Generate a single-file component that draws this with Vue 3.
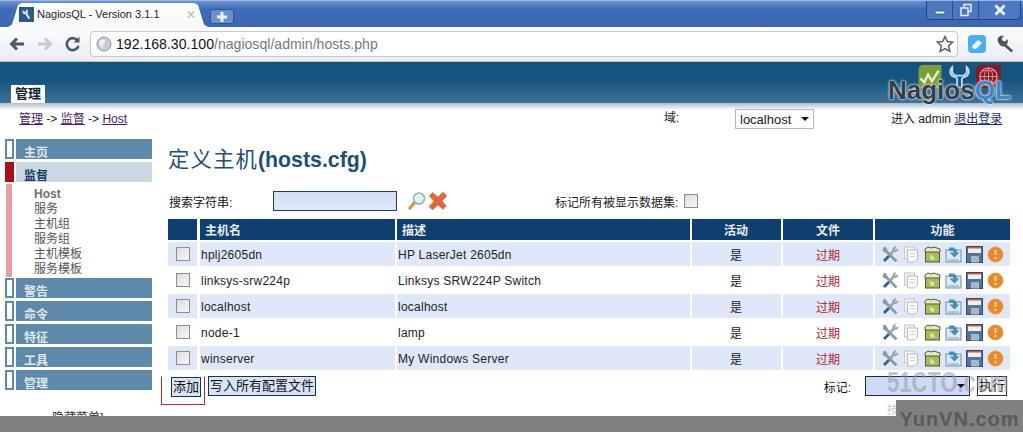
<script setup>
const rows = [
  { name: 'hplj2605dn', desc: 'HP LaserJet 2605dn' },
  { name: 'linksys-srw224p', desc: 'Linksys SRW224P Switch' },
  { name: 'localhost', desc: 'localhost' },
  { name: 'node-1', desc: 'lamp' },
  { name: 'winserver', desc: 'My Windows Server' },
]
const closedTop = ['主页']
const closedBottom = ['警告', '命令', '特征', '工具', '管理']
const subs = ['服务', '主机组', '服务组', '主机模板', '服务模板']
</script>

<template>
  <div class="page">
    <div class="tabbar">
      <div class="tab">
        <svg class="favicon" width="15" height="15" viewBox="0 0 16 16"><rect width="16" height="16" fill="#2a5a85"/><path d="M4 3c-1 3 0 5 3 5l3 5 2-1-3-5c1-2 1-3-1-5l-1 3-2-.5z" fill="#cfe0ee"/></svg>
        <span class="tabtitle">NagiosQL - Version 3.1.1</span>
        <span class="tabclose">×</span>
      </div>
      <div class="newtab"><svg width="12" height="12" viewBox="0 0 12 12"><path d="M6 1v10M1 6h10" stroke="#e8f0fa" stroke-width="3"/></svg></div>
      <div class="winbtns">
        <div class="winbtn"><svg width="14" height="14" viewBox="0 0 14 14"><rect x="2" y="8" width="10" height="3" rx="1" fill="#e6eef8" stroke="#2a4a7a" stroke-width=".7"/></svg></div>
        <div class="winbtn"><svg width="14" height="14" viewBox="0 0 14 14"><rect x="5" y="1.5" width="7" height="7" fill="none" stroke="#e6eef8" stroke-width="1.5"/><rect x="2" y="5" width="7" height="7.5" fill="#4a76bd" stroke="#e6eef8" stroke-width="1.5"/></svg></div>
        <div class="winbtn wide"><svg width="14" height="14" viewBox="0 0 14 14"><path d="M2.5 2.5l9 9M11.5 2.5l-9 9" stroke="#e6eef8" stroke-width="3"/></svg></div>
      </div>
    </div>

    <div class="toolbar">
      <svg class="navicon" width="18" height="18" viewBox="0 0 18 18"><path d="M3 9h13M9 3.500L3.500 9 9 14.500" fill="none" stroke="#4a5a6e" stroke-width="3"/></svg>
      <svg class="navicon" width="18" height="18" viewBox="0 0 18 18"><path d="M15 9H2M9 3.500L14.500 9 9 14.500" fill="none" stroke="#c6ccd4" stroke-width="3"/></svg>
      <svg class="navicon" width="18" height="18" viewBox="0 0 18 18"><path d="M14.500 11a6 6 0 1 1-.6-5" fill="none" stroke="#4a5a6e" stroke-width="2.600"/><path d="M15.500 1.500v6h-6z" fill="#4a5a6e"/></svg>
      <div class="omnibox">
        <svg width="16" height="16" viewBox="0 0 16 16"><circle cx="8" cy="8" r="7" fill="#c8ccd2" stroke="#8c929a"/><path d="M3 6c2-3 5-3 6-1s-3 3-2 6-3-1-4-5z" fill="#f2f3f5"/></svg>
        <span class="url"><b>192.168.30.100</b><i>/nagiosql/admin/hosts.php</i></span>
        <svg class="star" width="18" height="18" viewBox="0 0 18 18"><path d="M9 1.500l2.300 5 5.400.6-4 3.700 1.100 5.400L9 13.500l-4.800 2.700 1.100-5.400-4-3.700 5.400-.6z" fill="#fff" stroke="#5a626c" stroke-width="1.500"/></svg>
      </div>
      <svg class="ext" width="20" height="20" viewBox="0 0 20 20"><rect x="1" y="1" width="18" height="18" rx="4" fill="#4bb0ea"/><path d="M5 12l6-6 4 3-6 6-3-.5z" fill="#eef7fd"/></svg>
      <svg class="wrench" width="20" height="20" viewBox="0 0 20 20"><path d="M1.500 5.500C2 2.500 5 1 8 2L5.500 4.500l1.500 2.500 2.500.5L11 5c1.500 2 1 4-.5 5.500l6.500 6-1.500 2-7-6C5 13 2 10 1.500 5.500z" fill="#4a5560"/></svg>
    </div>

    <header class="appbar">
      <div class="apptab">管理</div>
      <div class="logo">
        <div class="logoicons">
          <svg width="24" height="23" viewBox="0 0 24 24"><path d="M3 0h21v24H0V3z" fill="#7e9c3c"/><path d="M2 14l4 4 4-8 4 7 7-11" fill="none" stroke="#e9f0d0" stroke-width="2.500"/></svg>
          <svg width="22" height="23" viewBox="0 0 22 24"><path d="M4 2C1 5 1 10 5 12c2 1 3 1 4 2v10h5V14c1-1 2-1 4-2 4-2 4-7 1-10v6l-3 3H7L4 8z" fill="#1c5a86" stroke="#c3dbee" stroke-width="1.800"/></svg>
          <svg width="25" height="23" viewBox="0 0 26 24"><path d="M3 0h23v24H0V3z" fill="#7c1b2c"/><circle cx="13" cy="12" r="9" fill="none" stroke="#e98c8c" stroke-width="1.500"/><path d="M4 12h18M13 3v18M7 6h12M7 18h12M13 3c-6 5-6 13 0 18M13 3c6 5 6 13 0 18" fill="none" stroke="#e98c8c"/></svg>
        </div>
        <div class="logotext">Nagios<span>QL</span></div>
      </div>
    </header>

    <div class="crumbbar">
      <div class="crumbs"><a>管理</a> -&gt; <a>监督</a> -&gt; <a>Host</a></div>
      <div class="domain">域:</div>
      <div class="select plain"><span>localhost</span><i class="caret"></i></div>
      <div class="login">进入 admin <a>退出登录</a></div>
    </div>

    <div class="body">
      <nav class="side">
        <div v-for="m in closedTop" :key="m" class="menu">
          <span class="mark"></span><span class="menuitem">{{ m }}</span>
        </div>
        <div class="menu">
          <span class="mark red"></span><span class="menuitem active">监督</span>
        </div>
        <div class="subwrap">
          <span class="subbar"></span>
          <div class="sublist">
            <div class="sub strong">Host</div>
            <div v-for="s in subs" :key="s" class="sub">{{ s }}</div>
          </div>
        </div>
        <div v-for="m in closedBottom" :key="m" class="menu">
          <span class="mark"></span><span class="menuitem">{{ m }}</span>
        </div>
        <div class="hide">隐藏菜单]</div>
      </nav>

      <main class="content">
        <h1><span class="cjk">定义主机</span>(hosts.cfg)</h1>
        <div class="filter">
          <span class="flabel">搜索字符串:</span>
          <span class="search"></span>
          <svg class="ficon" width="20" height="20" viewBox="0 0 20 20"><path d="M8 11l-5 6" stroke="#d09a50" stroke-width="3.500" stroke-linecap="round"/><circle cx="12" cy="7.500" r="5.500" fill="#e6f1f6" stroke="#8fb2c2" stroke-width="1.600"/></svg>
          <svg class="ficon x" width="20" height="20" viewBox="0 0 20 20"><path d="M1 5l3.500-3.500L10 6l5-5 4 4-5 5 4.500 5-3.500 3.500L10 14l-5.500 5L1 15.500 6 10z" fill="#e2673a" stroke="#c98a62" stroke-width=".6"/></svg>
          <span class="marklabel">标记所有被显示数据集:</span>
          <span class="cb"></span>
        </div>

        <table class="grid">
          <colgroup>
            <col class="c0" /><col class="c1" /><col class="c2" /><col class="c3" /><col class="c4" /><col class="c5" />
          </colgroup>
          <thead>
            <tr>
              <th></th><th class="l">主机名</th><th class="l">描述</th><th>活动</th><th>文件</th><th>功能</th>
            </tr>
          </thead>
          <tbody>
            <tr v-for="(r, i) in rows" :key="r.name" :class="{ odd: i % 2 === 0 }">
              <td class="ctr"><span class="cb"></span></td>
              <td class="txt">{{ r.name }}</td>
              <td class="txt">{{ r.desc }}</td>
              <td class="ctr">是</td>
              <td class="ctr expired">过期</td>
              <td class="ctr">
                <div class="acts">
                  <svg width="17" height="17" viewBox="0 0 17 17"><path d="M2 1l2 1 1.500 3 9.500 9.500-1.500 1.500L4 6.500 1 5z" fill="#8d9aa6" stroke="#66737f" stroke-width=".5"/><path d="M16 3c-.5 2-2 3-3.500 2.500L8 10l-1.500-1.500L11 4c-.5-1.500.5-3 2.500-3.500L12.500 3l1.500 1z" fill="#a5b0ba" stroke="#66737f" stroke-width=".5"/><path d="M1 14l5-5 2 2-5 5z" fill="#2f5f9a"/></svg>
                  <svg width="17" height="17" viewBox="0 0 17 17"><rect x="1.500" y="1" width="10" height="12" fill="#f1f1ee" stroke="#c8cac7"/><path d="M4.500 4h10v9l-3 3h-7z" fill="#fafaf8" stroke="#b9bcb9"/><path d="M7 7.500h5M7 10.500h5" stroke="#cdcfcd"/></svg>
                  <svg width="17" height="17" viewBox="0 0 17 17"><rect x="1.500" y="5" width="14" height="11" fill="#a9bc5b" stroke="#4e5b2a"/><path d="M1 6V3l3-2 3 1 3-1 3 1 3 1v3z" fill="#e6e4c5" stroke="#555c3b"/><path d="M6 9l3 1 2 3-4 1z" fill="#dfe8b0"/></svg>
                  <svg width="17" height="17" viewBox="0 0 17 17"><rect x="1" y="4" width="15" height="12" fill="#dcebf5" stroke="#6d8ea6"/><path d="M4 1.500h5l3 3v2h2.500l-5 5-5-5H8V5H4z" fill="#4b90b8"/><path d="M3 14h11" stroke="#8a9aa6"/></svg>
                  <svg width="17" height="17" viewBox="0 0 17 17"><rect x=".500" y=".500" width="16" height="16" fill="#50769c" stroke="#2e4c6a"/><rect x="2" y="1" width="13" height="6" fill="#f4efe9"/><rect x="2" y="1" width="13" height="1.500" fill="#d0544f"/><rect x="5" y="10" width="8" height="6.500" fill="#aab7c3"/></svg>
                  <svg width="17" height="17" viewBox="0 0 17 17"><circle cx="8.500" cy="8.500" r="7.500" fill="#e8892b" stroke="#e39a52"/><path d="M8.500 4v5" stroke="#f6d79a" stroke-width="2"/><circle cx="8.500" cy="12" r="1.200" fill="#f6d79a"/></svg>
                </div>
              </td>
            </tr>
          </tbody>
        </table>

        <div class="actions">
          <div class="leftbtns">
            <span class="hl"><span class="btn">添加</span></span>
            <span class="btn">写入所有配置文件</span>
          </div>
          <div class="rightbtns">
            <span class="marklabel2">标记:</span>
            <div class="select tinted"><i class="caret"></i></div>
            <span class="btn ghost">执行</span>
          </div>
        </div>
      </main>
    </div>

    <div class="footerbar"></div>
    <div class="wm wm1">51CTO.com</div>
    <div class="wm wm3">技</div>
    <div class="wm2"><span>YunVN.com</span></div>
  </div>
</template>

<style scoped>
.page { position: relative; width: 1023px; height: 432px; overflow: hidden; background: #fff; font: 12px "Liberation Sans", "Noto Sans CJK SC", sans-serif; color: #111; }
.tabbar { height: 27px; display: flex; align-items: flex-end; padding-left: 8px; background: linear-gradient(#6f93cf, #3f6db8 30%, #3a66ae); border-top: 1px solid #9db6dc; box-sizing: border-box; position: relative; }
.tab { width: 200px; height: 24px; box-sizing: border-box; background: linear-gradient(#fff, #f6f8fa); clip-path: polygon(0 100%, 4px 90%, 10px 8%, 14px 0, calc(100% - 14px) 0, calc(100% - 10px) 8%, calc(100% - 4px) 90%, 100% 100%); display: flex; align-items: center; padding: 0 12px 2px 11px; gap: 3px; }
.favicon { flex: none; }
.tabtitle { font-size: 11px; color: #222; flex: 1; white-space: nowrap; }
.tabclose { color: #b9bdc3; font-size: 17px; line-height: 1; }
.newtab { width: 24px; height: 15px; margin: 0 0 3px 2px; background: #6b90cd; border: 1px solid #2d5595; border-radius: 3px; display: flex; align-items: center; justify-content: center; box-sizing: border-box; }
.winbtns { position: absolute; top: 0; right: 2px; display: flex; height: 18px; border: 1px solid #24457e; border-top: 0; border-radius: 0 0 4px 4px; background: #4c78bf; }
.winbtn { width: 25px; display: flex; align-items: center; justify-content: center; border-right: 1px solid #2c4f88; }
.winbtn.wide { width: 41px; border-right: 0; }

.toolbar { height: 35px; box-sizing: border-box; background: linear-gradient(#fbfcfd, #e9edf2); display: flex; align-items: center; padding: 0 7px 0 8px; gap: 9px; border-bottom: 1px solid #bdc4cc; }
.navicon { flex: none; margin-right: 1px; }
.omnibox { flex: 1; margin-left: -2px; height: 26px; box-sizing: border-box; background: #fff; border: 1px solid #c4c9cf; border-radius: 4px; display: flex; align-items: center; padding: 0 3px 0 5px; gap: 4px; }
.url { flex: 1; font-size: 14.100px; white-space: nowrap; }
.url b { font-weight: 400; color: #111; }
.url i { font-style: normal; color: #6e7a82; }
.star { flex: none; }
.ext, .wrench { flex: none; }

.appbar { height: 41px; background: linear-gradient(#15547f 45%, #3f7298); position: relative; display: flex; align-items: flex-end; padding-left: 11px; box-sizing: border-box; }
.apptab { width: 34px; height: 18px; background: #fff; color: #123; font-weight: 700; font-size: 13px; text-align: center; line-height: 18px; }
.logo { position: absolute; right: 13px; bottom: -2px; width: 122px; height: 40px; }
.logoicons { position: absolute; left: 30px; top: 0; display: flex; gap: 6px; }
.logotext { position: absolute; left: 0; bottom: 0; font: 700 26px/30px "Liberation Sans", sans-serif; color: #333d48; text-shadow: 0 0 2px #fff, 0 0 3px #dfe8ef; white-space: nowrap; }
.logotext span { color: #3f86c4; }

.crumbbar { height: 35px; box-sizing: border-box; padding: 9px 0 0 19px; display: flex; align-items: flex-start; background: linear-gradient(#a8bccb, #fff 7px); color: #222; }
.crumbs { width: 645px; line-height: 15px; }
.crumbs a { color: #4a1d5e; text-decoration: underline; }
.domain { width: 71px; line-height: 15px; margin-top: -1px; }
.select { box-sizing: border-box; display: flex; align-items: center; justify-content: space-between; }
.select.plain { width: 79px; height: 20px; margin-top: -3px; padding: 0 4px; border: 1px solid #b8b8b8; background: #fff; font-size: 13px; }
.caret { width: 0; height: 0; border: 4px solid transparent; border-top: 4px solid #111; border-bottom: 0; margin-left: auto; }
.login { margin-left: 77px; line-height: 15px; white-space: nowrap; }
.login a { color: #1a2f6a; text-decoration: underline; }

.body { display: flex; align-items: flex-start; }
.side { width: 152px; flex: none; padding: 1px 0 0 5px; box-sizing: border-box; }
.menu { display: flex; gap: 2px; height: 20px; margin-bottom: 3px; }
.mark { width: 9px; box-sizing: border-box; border: 2px solid #5f89aa; background: #fff; }
.mark.red { background: #a80f18; border-color: #a80f18; }
.menuitem { flex: 1; background: #5f89aa; color: #dfe8ef; font-weight: 700; font-size: 12px; line-height: 29px; height: 20px; overflow: hidden; padding-left: 8px; }
.menuitem.active { background: #c9d8e3; color: #123b5e; }
.subwrap { display: flex; height: 93px; margin: -1px 0 1px; }
.subbar { width: 6px; margin-left: 1px; background: #e3a0a4; }
.sublist { padding: 3px 0 0 22px; }
.sub { line-height: 15px; color: #555; }
.sub.strong { font-weight: 700; color: #6e6e6e; }
.hide { margin: 18px 0 0 47px; color: #333; }

.content { flex: 1; padding: 0 13px 0 16px; min-width: 0; }
h1 { margin: 0; height: 45px; padding-top: 9px; box-sizing: border-box; color: #1d4e75; font: 700 21.300px/26px "Liberation Sans", "Noto Sans CJK SC", sans-serif; white-space: nowrap; }
.cjk { font-weight: 400; letter-spacing: 1.200px; }
.filter { display: flex; align-items: center; height: 36px; box-sizing: border-box; padding-left: 1px; }
.flabel { width: 104px; }
.search { width: 124px; height: 20px; box-sizing: border-box; background: linear-gradient(#d1def3, #e0e9f8); border: 1px solid #1f3b63; }
.ficon { margin-left: 10px; flex: none; }
.ficon.x { margin-left: 1px; }
.marklabel { margin-left: 107px; width: 129px; white-space: nowrap; color: #222; }
.cb { display: inline-block; width: 14px; height: 14px; box-sizing: border-box; border: 1px solid #8d8d8d; background: linear-gradient(135deg, #dcdcdc, #f8f8f8); vertical-align: middle; }
.grid { border-collapse: separate; border-spacing: 0; width: 842px; table-layout: fixed; }
.c0 { width: 32px; } .c1 { width: 197px; } .c2 { width: 295px; } .c3 { width: 91px; } .c4 { width: 92px; } .c5 { width: 135px; }
th { height: 20px; padding: 0 0 1px; background: #0f3f6e; color: #e8eef4; font-size: 12px; font-weight: 700; text-align: center; border-right: 2px solid #fff; }
th.l { text-align: left; padding-left: 5px; }
th:last-child { border-right: 0; }
th:first-child, td:first-child { border-right-width: 3px; }
th:nth-child(4), td:nth-child(4) { padding-right: 1px; }
td { height: 24px; padding: 0; border-right: 2px solid #fff; border-top: 2px solid #fff; color: #222; white-space: nowrap; }
td:last-child { border-right: 0; }
td.txt { height: 23px; padding: 1px 0 0 1px; letter-spacing: .25px; }
.odd td { background: #dfe8f8; }
.ctr { text-align: center; }
.expired { color: #b01c2e; }
.acts { display: flex; justify-content: center; gap: 4px; padding-left: 1px; }
.actions { display: flex; justify-content: space-between; align-items: flex-start; padding-top: 6px; }
.leftbtns { display: flex; align-items: flex-start; gap: 3px; margin-left: -7px; }
.hl { display: block; width: 44px; height: 29px; box-sizing: border-box; border: 1px solid #b02a30; border-top-color: transparent; padding-left: 9px; }
.btn { display: inline-block; height: 20px; line-height: 18px; box-sizing: border-box; padding: 0 1px; border: 1px solid #17324f; background: #d8e4f6; font-size: 13px; white-space: nowrap; }
.rightbtns { display: flex; align-items: center; padding-right: 3px; }
.marklabel2 { margin-right: 14px; }
.tinted { width: 105px; height: 20px; padding: 0 4px; border: 1px solid #16285c; background: #cdd9f5; margin-right: 7px; }
.btn.ghost { background: #fff; }

.footerbar { position: absolute; left: 0; right: 0; bottom: 0; height: 16px; background: #808080; }
.wm { position: absolute; font-weight: 700; white-space: nowrap; }
.wm1 { left: 887px; top: 369px; font-size: 22px; line-height: 20px; transform: scaleY(1.350); transform-origin: 0 0; color: rgba(150, 150, 150, .55); }
.wm3 { left: 887px; top: 401px; font-size: 11px; font-weight: 400; color: #c4c4c4; }
.wm2 { position: absolute; left: 896px; top: 400px; width: 127px; height: 32px; background: #808080; text-align: center; }
.wm2 span { font: 700 20px/38px "Liberation Sans", sans-serif; color: #5a5a5a; letter-spacing: 1px; }
</style>
